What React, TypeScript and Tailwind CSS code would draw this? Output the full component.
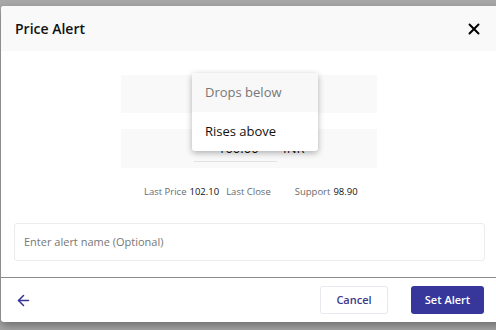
import React from 'react';
import { X, ArrowLeft } from 'lucide-react';

const font = { fontFamily: '"Open Sans", "Noto Sans", sans-serif' };

export default function App() {
  return (
    <div style={font} className="w-[496px] h-[330px] overflow-hidden bg-[#a8a8a8] pt-[6px] pl-[1px]">
      <div className="relative w-[505px] rounded-tl-[3px] rounded-bl-[3px] bg-white shadow-[0_4px_10px_rgba(0,0,0,0.35)]">
        <header className="h-[45px] bg-[#f9f9f9] flex items-center justify-between pl-[14px] pr-[23px] rounded-tl-[3px]">
          <h1 className="text-[14px] font-semibold text-[#111]">Price Alert</h1>
          <X className="w-[18px] h-[18px] text-black" strokeWidth={2.6} />
        </header>

        <div className="flex flex-col items-start pt-[24px]">
          <div className="ml-[120px] w-[256px] h-[38px] bg-[#f9f9f9]" />
          <div className="ml-[120px] mt-[16px] w-[256px] h-[39px] bg-[#f9f9f9] flex items-end pb-[6px]">
            <div className="ml-[73px] w-[83px] h-[26px] border-b border-[#e2e2e2] flex items-end pb-[4px] text-[13px] leading-[18px] text-[#111] pl-[24px]">
              100.00
            </div>
            <span className="ml-[6px] mb-[5px] text-[13px] leading-[18px] text-[#111]">INR</span>
          </div>

          <div className="ml-[143px] mt-[17px] h-[14px] flex items-center text-[9.5px] text-[#6b6b6b] whitespace-nowrap">
            <span>Last Price</span>
            <span className="ml-[3px] text-[#111]">102.10</span>
            <span className="ml-[7px]">Last Close</span>
            <span className="ml-[24px]">Support</span>
            <span className="ml-[3px] text-[#111]">98.90</span>
          </div>

          <div className="ml-[13px] mt-[24px] w-[471px] h-[38px] border border-[#ececec] rounded-[3px] flex items-center pl-[9px] text-[11px] text-[#777]">
            Enter alert name (Optional)
          </div>
        </div>

        <footer className="mt-[16px] h-[45px] border-t border-[#8c8c8c] flex items-center pl-[14px]">
          <ArrowLeft className="w-[17px] h-[17px] text-[#3a3396]" strokeWidth={2.2} />
          <div className="ml-auto mr-[22px] flex items-center gap-[23px]">
            <button className="w-[68px] h-[28px] border border-[#e8e8ee] rounded-[3px] text-[11px] font-semibold text-[#3a3a8c]">
              Cancel
            </button>
            <button className="w-[73px] h-[28px] rounded-[3px] bg-[#37369a] text-[11px] font-semibold text-white">
              Set Alert
            </button>
          </div>
        </footer>

        <div className="absolute left-[191px] top-[67px] w-[126px] bg-white rounded-[3px] shadow-[0_2px_6px_rgba(0,0,0,0.3)] overflow-hidden">
          <div className="h-[39px] bg-[#f8f8f8] flex items-center pl-[13px] text-[13px] text-[#777]">Drops below</div>
          <div className="h-[39px] flex items-center pl-[13px] text-[13px] text-[#111]">Rises above</div>
        </div>
      </div>
    </div>
  );
}
